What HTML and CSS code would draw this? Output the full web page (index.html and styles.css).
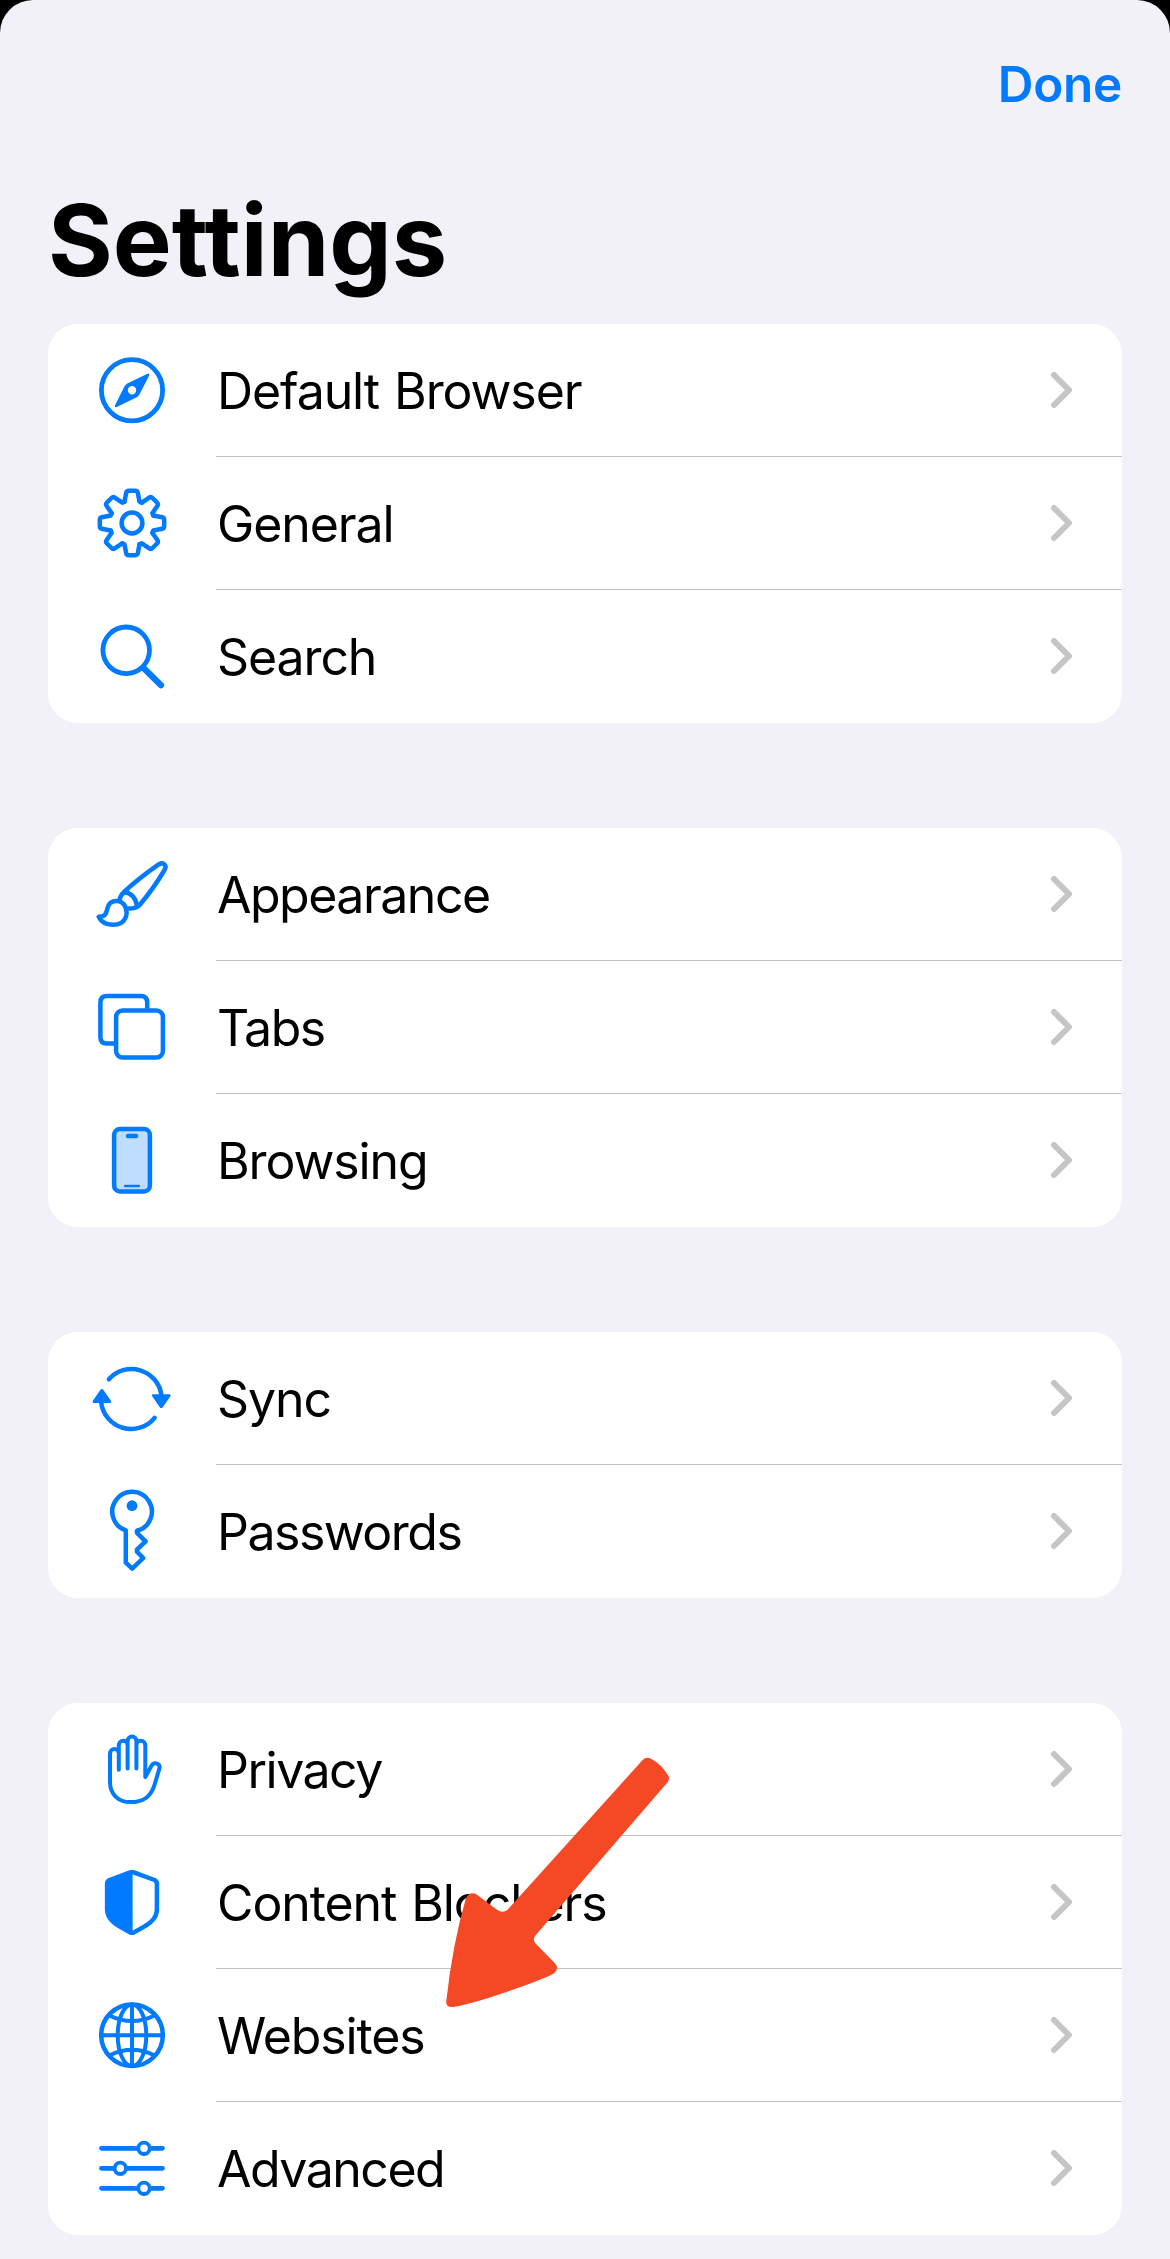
FILE: index.html
```
<!DOCTYPE html>
<html lang="en">
<head>
    <meta charset="UTF-8">
    <title>Settings</title>
    <link rel="stylesheet" href="styles.css">
</head>
<body>
    <svg class="defs" width="0" height="0">
        <symbol id="chevron" viewBox="0 0 30 44">
            <path d="M8 7l15 15-15 15"/>
        </symbol>
        <path id="tooth" d="M-7.5-21.3L-5.8-30.2Q-5.4-32.2-3.2-32.2H3.2Q5.4-32.2 5.8-30.2L7.5-21.3 9.8-20.4"/>
    </svg>

    <div class="sheet">
        <div class="navbar">
            <a class="done-btn">Done</a>
        </div>
        <h1 class="title">Settings</h1>

        <div class="group">
            <div class="row">
                <svg class="icon" viewBox="-45 -45 90 90">
                    <circle cy=".3" r="30.6" stroke-width="4.8"/>
                    <path class="solid" fill-rule="evenodd" d="M15.5-16.2Q18-17 17.2-14.5L7.3 4.8 5.2 7.1-15.2 17Q-17.8 17.8-17 15.2L-7.2-4.3-5.2-6.3zM4.2.3A4.2 4.2 0 1 0-4.2.3 4.2 4.2 0 1 0 4.2.3z"/>
                </svg>
                <span class="label">Default Browser</span>
                <svg class="chevron"><use href="#chevron"/></svg>
            </div>
            <div class="row">
                <svg class="icon" viewBox="-45 -45 90 90">
                    <circle r="10.4"/>
                    <use href="#tooth"/>
                    <use href="#tooth" transform="rotate(45)"/>
                    <use href="#tooth" transform="rotate(90)"/>
                    <use href="#tooth" transform="rotate(135)"/>
                    <use href="#tooth" transform="rotate(180)"/>
                    <use href="#tooth" transform="rotate(225)"/>
                    <use href="#tooth" transform="rotate(270)"/>
                    <use href="#tooth" transform="rotate(315)"/>
                </svg>
                <span class="label">General</span>
                <svg class="chevron"><use href="#chevron"/></svg>
            </div>
            <div class="row">
                <svg class="icon" viewBox="-45 -45 90 90">
                    <circle cx="-5.8" cy="-5.7" r="23.3" stroke-width="4.8"/>
                    <path stroke-width="6.2" d="M11.8 12.2L29 29.2"/>
                </svg>
                <span class="label">Search</span>
                <svg class="chevron"><use href="#chevron"/></svg>
            </div>
        </div>

        <div class="group">
            <div class="row">
                <svg class="icon" viewBox="-45 -45 90 90">
                    <path d="M-12.7 6.3Q-11.5 1-7.7-2.3 6-15 27-29.8C31.5-32.2 35-28.5 32.8-24.5Q22-6 7.8 10.8 3.5 14.8-3.2 14.5"/>
                    <path d="M-7.4-1.8Q2.5-.5 5 11.2"/>
                    <path d="M-33.3 22.7C-27 22.7-25.8 20-24.7 14.7-22.5 4.5-10.5 5.2-6.8 12.5-3.5 20-6 31-19.3 30.7-27.5 30.5-31.5 26.5-33.3 22.7z"/>
                </svg>
                <span class="label tight">Appearance</span>
                <svg class="chevron"><use href="#chevron"/></svg>
            </div>
            <div class="row">
                <svg class="icon" viewBox="-45 -45 90 90">
                    <rect x="-15.9" y="-16.6" width="46.8" height="47.2" rx="6.5"/>
                    <path stroke-linecap="butt" d="M15.2-18.3V-24.4Q15.2-30.9 8.7-30.9H-25.1Q-31.6-30.9-31.6-24.4V10.1Q-31.6 16.6-25.1 16.6H-17"/>
                </svg>
                <span class="label tight">Tabs</span>
                <svg class="chevron"><use href="#chevron"/></svg>
            </div>
            <div class="row">
                <svg class="icon" viewBox="-45 -45 90 90">
                    <rect class="tint" x="-17.9" y="-30.9" width="35.8" height="62.4" rx="6"/>
                    <path d="M-4-24H4"/>
                    <path stroke-width="2.6" d="M-6.7 26H6.7"/>
                </svg>
                <span class="label">Browsing</span>
                <svg class="chevron"><use href="#chevron"/></svg>
            </div>
        </div>

        <div class="group">
            <div class="row">
                <svg class="icon" viewBox="-45 -45 90 90">
                    <path d="M-23.1-18.8A30.2 30.2 0 0 1 29.4-3M-30.9 4A30.2 30.2 0 0 0 22.6 19.8"/>
                    <path class="solid" d="M21.3-3.7H37.3Q39.5-3.4 38.2-1.4L30.8 9.2Q29.2 11 27.7 9.2L20.4-1.4Q19.2-3.4 21.3-3.7zM-22.3 5H-38Q-40.3 4.7-39 2.6L-31.7-8Q-30.2-10-28.6-8L-21.2 2.6Q-20 4.7-22.3 5z"/>
                </svg>
                <span class="label">Sync</span>
                <svg class="chevron"><use href="#chevron"/></svg>
            </div>
            <div class="row">
                <svg class="icon" viewBox="-45 -45 90 90">
                    <path d="M-6.2-.6A19.8 19.8 0 1 1 5-.2V1.8L13.6 10.3 4.9 18.6V20.6L11.2 27 .2 37.6-6.2 31.6z"/>
                    <circle class="solid" cy="-25.3" r="5.4"/>
                </svg>
                <span class="label tight">Passwords</span>
                <svg class="chevron"><use href="#chevron"/></svg>
            </div>
        </div>

        <div class="group">
            <div class="row">
                <svg class="icon" viewBox="-45 -45 90 90">
                    <path stroke-width="4" d="M-13.2.8V-15.5A4.4 4.4 0 0 0-22-15.5V13C-22 25-14 33.1-1.5 33.1 11 33.1 18 28.5 22 17.5L27.2.2C29-5.5 22-8.2 19.4-3.2L13.3 8V-23.8A4.4 4.4 0 0 0 4.4-23.8V-.5V-28A4.4 4.4 0 0 0-4.4-28V-.5V-23.8A4.4 4.4 0 0 0-13.2-23.8V-15.5"/>
                </svg>
                <span class="label tight">Privacy</span>
                <svg class="chevron"><use href="#chevron"/></svg>
            </div>
            <div class="row">
                <svg class="icon" viewBox="-45 -45 90 90">
                    <path d="M-1.8-29.7Q0-30.4 1.8-29.7L22.5-22Q24.9-21 24.9-18V7.5C24.9 17.5 16.5 23 1.7 30.4Q0 31.2-1.7 30.4C-16.5 23-24.9 17.5-24.9 7.5V-18Q-24.9-21-22.5-22z"/>
                    <path class="solid" d="M.6-30.5L-24-21V8C-24 18-15 23 .6 31z"/>
                </svg>
                <span class="label">Content Blockers</span>
                <svg class="chevron"><use href="#chevron"/></svg>
            </div>
            <div class="row">
                <svg class="icon" viewBox="-45 -45 90 90">
                    <circle cy=".2" r="30.8"/>
                    <ellipse cy=".2" rx="14.3" ry="30.8" stroke-width="4"/>
                    <path stroke-width="4" d="M0-30.6V31M-30.8.3H30.8M-22.5-19.5Q0-8.3 22.5-19.5M-22.5 20.5Q0 9 22.5 20.5"/>
                </svg>
                <span class="label">Websites</span>
                <svg class="chevron"><use href="#chevron"/></svg>
            </div>
            <div class="row">
                <svg class="icon" viewBox="-45 -45 90 90">
                    <path stroke-width="4.8" d="M-30.5-19.7H30.5M-30.5.3H30.5M-30.5 20.3H30.5"/>
                    <circle class="knob" cx="12" cy="-19.7" r="5.7"/>
                    <circle class="knob" cx="-11.7" cy=".3" r="5.7"/>
                    <circle class="knob" cx="12" cy="20.3" r="5.7"/>
                </svg>
                <span class="label tight">Advanced</span>
                <svg class="chevron"><use href="#chevron"/></svg>
            </div>
        </div>

        <!-- arrow pointing at Websites -->
        <svg class="arrow" viewBox="0 0 840 900">
            <path d="M668 90Q678 79 693 86 724 102 744 136 750 146 744 155L345 618Q338 628 346 640L405 700Q419 716 402 730 370 750 205 804 130 827 100 831 76 833 79 812 98 640 138 504 148 484 168 492L232 540Q248 551 262 540z"/>
        </svg>
    </div>
</body>
</html>
```
FILE: styles.css
```
body {
    margin: 0;
    background-color: #000;
    font-family: Inter, "Liberation Sans", sans-serif;
    color: #000;
}

.defs {
    position: absolute;
}

.sheet {
    position: relative;
    box-sizing: border-box;
    height: 2259px;
    padding: 0 48px;
    background-color: #f2f1f8;
    border-radius: 33px 33px 0 0;
    overflow: hidden;
}

.navbar {
    display: flex;
    justify-content: flex-end;
    align-items: center;
    height: 168px;
}

.done-btn {
    color: #007aff;
    font-size: 49.5px;
    font-weight: 600;
    letter-spacing: -0.3px;
}

.title {
    margin: 0;
    height: 156px;
    line-height: 144px;
    font-size: 99px;
    font-weight: 700;
    letter-spacing: 0;
}

.group {
    margin-bottom: 105px;
    background-color: #fff;
    border-radius: 30px;
}

.row {
    position: relative;
    display: flex;
    align-items: center;
    height: 133px;
    padding: 0 46px 1px 39px;
    box-sizing: border-box;
}

.row:not(:last-child)::after {
    content: "";
    position: absolute;
    left: 168px;
    right: 0;
    bottom: 0;
    height: 1px;
    background-color: #c2c2c5;
}

.icon {
    width: 90px;
    height: 90px;
    margin-right: 40px;
    fill: none;
    stroke: #007aff;
    stroke-width: 4.5;
    stroke-linecap: round;
    stroke-linejoin: round;
}

.icon .solid {
    fill: #007aff;
    stroke: none;
}

.icon .tint {
    fill: #bfdeff;
}

.icon .knob {
    fill: #fff;
    stroke-width: 3.8;
}

.label {
    flex: 1;
    padding-top: 2px;
    font-size: 50px;
    letter-spacing: -1.1px;
    word-spacing: 2px;
}

.label.tight {
    letter-spacing: -1.5px;
}

.chevron {
    width: 30px;
    height: 44px;
    fill: none;
    stroke: #c5c5c7;
    stroke-width: 6;
    stroke-linecap: round;
    stroke-linejoin: round;
}

.arrow {
    position: absolute;
    left: 420px;
    top: 1730px;
    width: 280px;
    height: 300px;
    fill: #f54925;
}
```
